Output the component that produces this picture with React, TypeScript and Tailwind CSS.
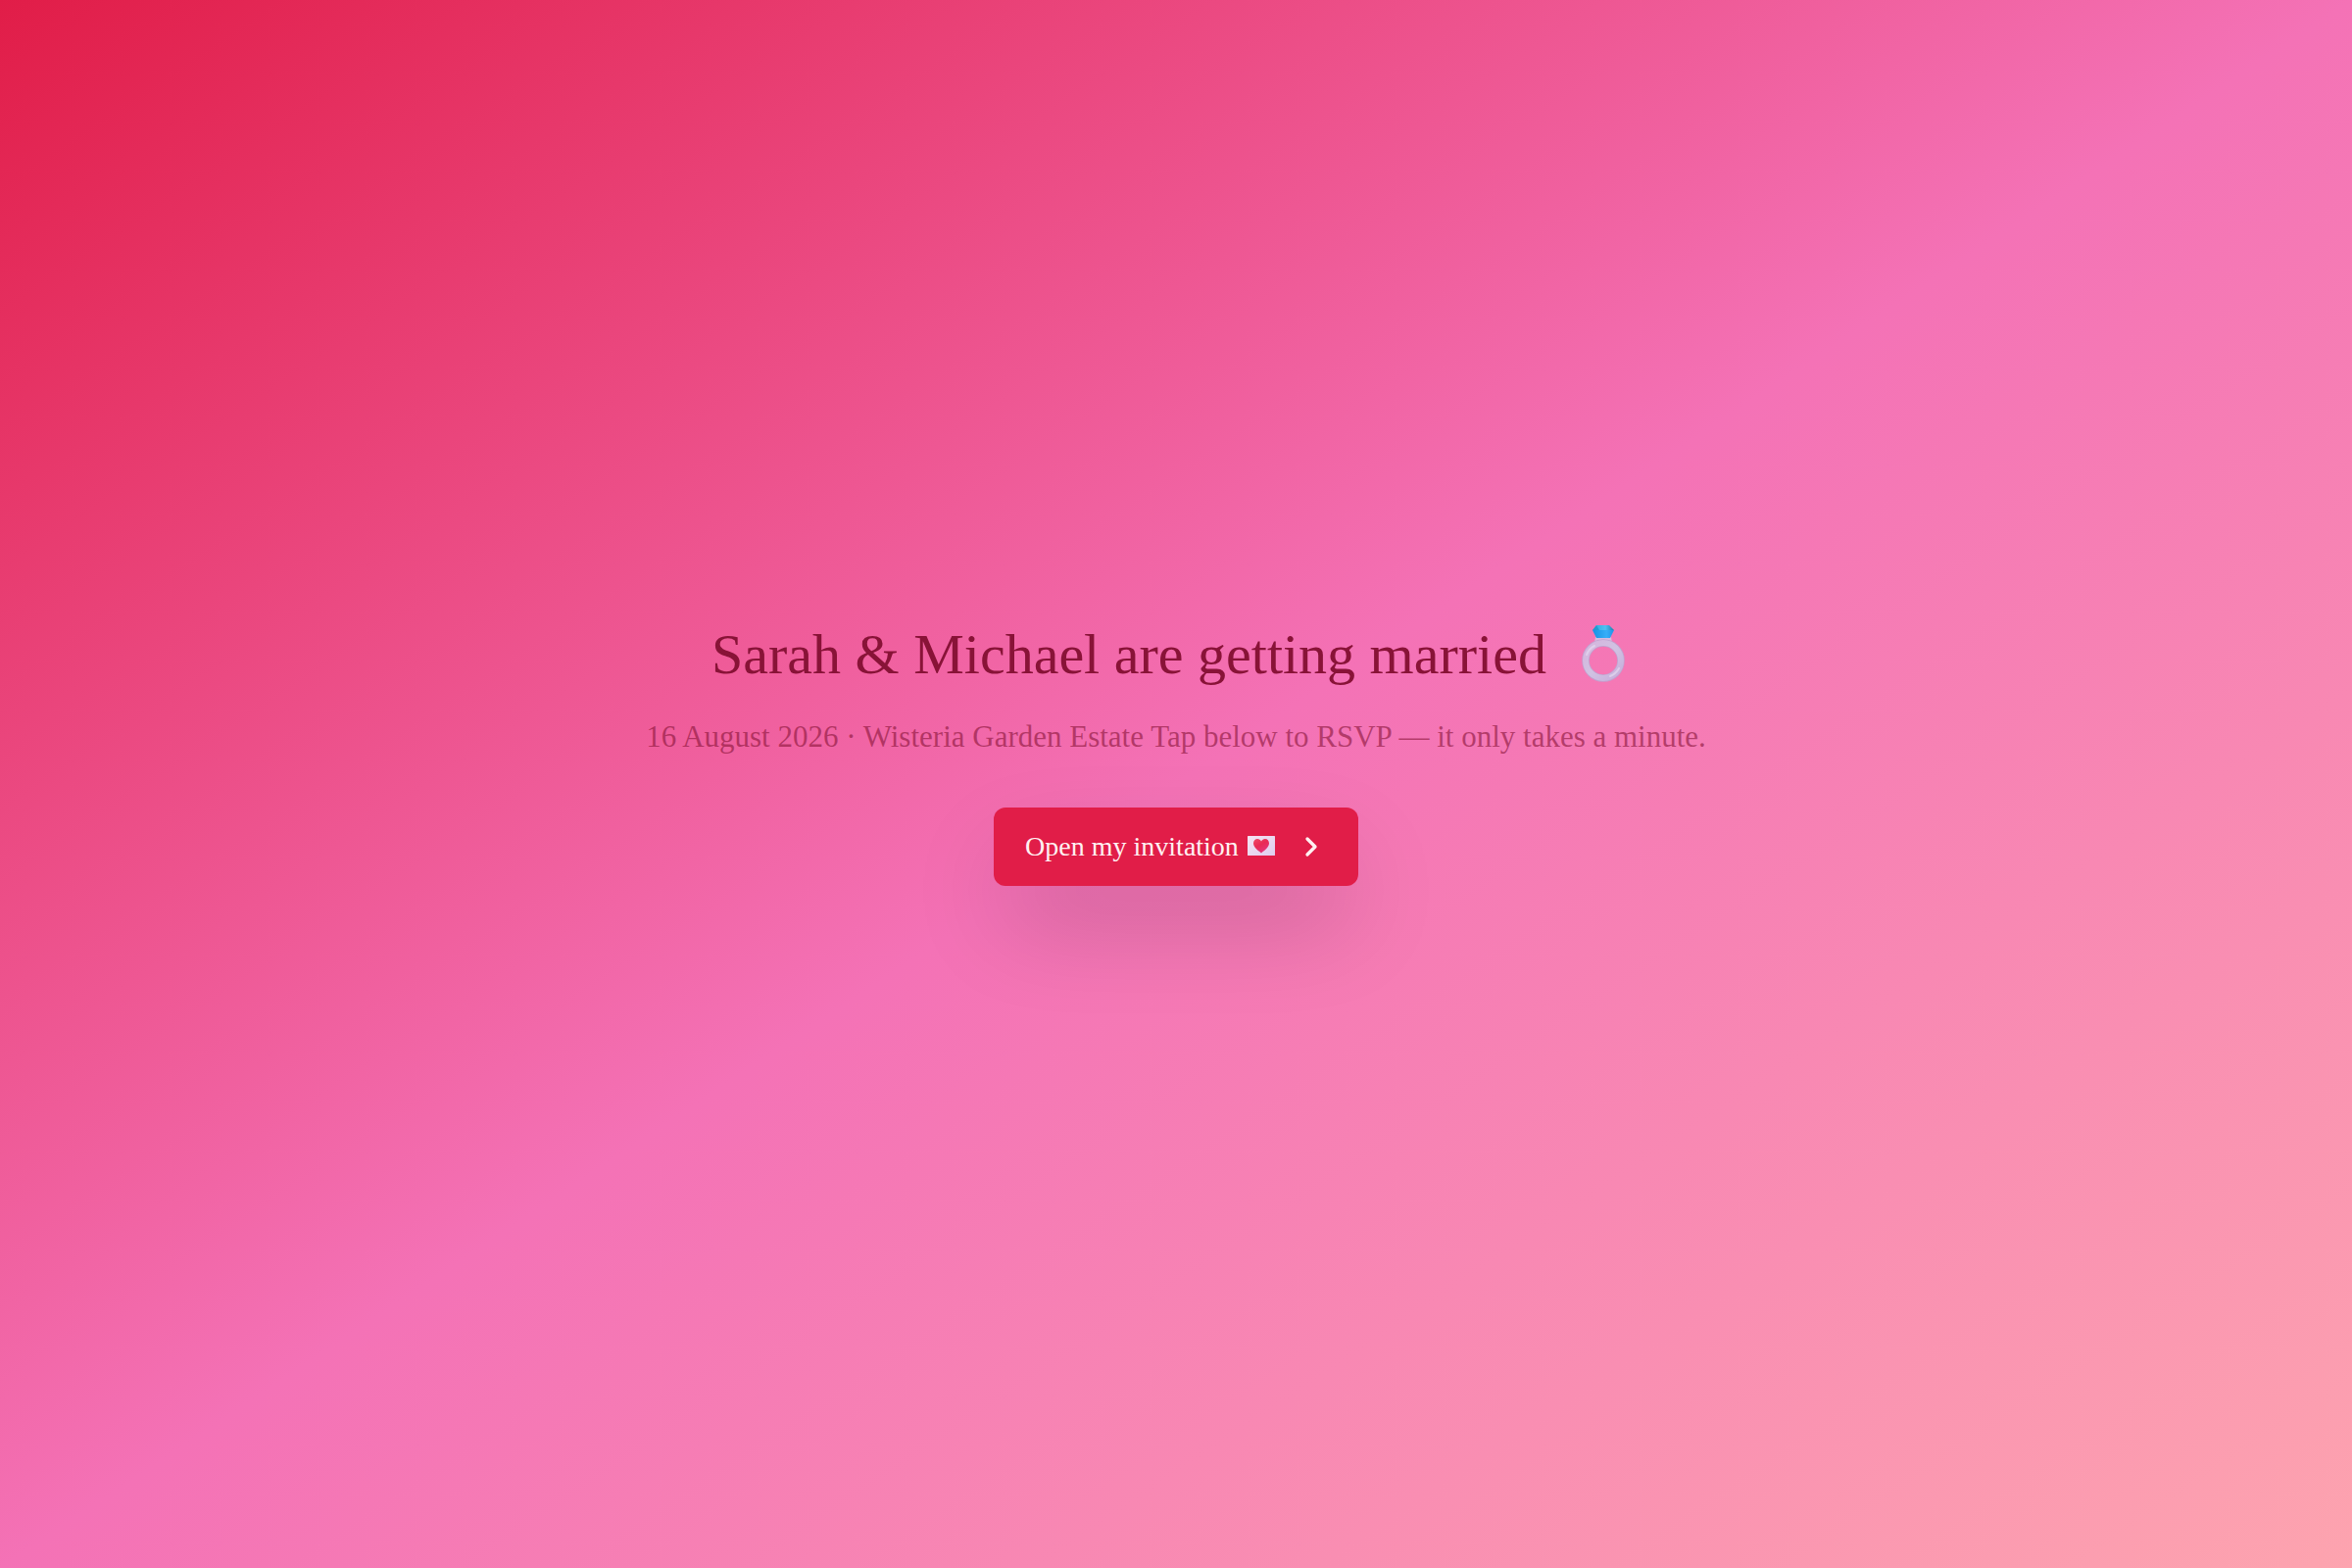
import { ChevronRight } from "lucide-react";

function RingIcon() {
  return (
    <svg viewBox="0 0 76 60" role="img" aria-label="Ring" className="h-[60px] w-[76px] shrink-0">
      <defs>
        <linearGradient id="band" x1="0" y1="0" x2="1" y2="1">
          <stop offset="0" stopColor="#d6b4dd" />
          <stop offset="0.5" stopColor="#d0c2e2" />
          <stop offset="1" stopColor="#c8addb" />
        </linearGradient>
        <linearGradient id="gemTop" x1="0" y1="0" x2="1" y2="0">
          <stop offset="0" stopColor="#27a9dd" />
          <stop offset="0.6" stopColor="#4fc0f2" />
          <stop offset="1" stopColor="#1b7fae" />
        </linearGradient>
        <linearGradient id="gemBase" x1="0" y1="0" x2="1" y2="0">
          <stop offset="0" stopColor="#1692e4" />
          <stop offset="0.65" stopColor="#36aef8" />
          <stop offset="1" stopColor="#1f93ea" />
        </linearGradient>
      </defs>
      <path d="M30 12h16l1 6H29z" fill="#d6bbe0" />
      <circle cx="38" cy="36" r="18" fill="none" stroke="#c0a3d0" strokeWidth="7.5" />
      <circle cx="38" cy="36" r="18" fill="none" stroke="url(#band)" strokeWidth="6" />
      <path d="M21 30a18 18 0 0 1 8-9M54 44a18 18 0 0 1-9 8" fill="none" stroke="#e2d8ef" strokeWidth="2" strokeLinecap="round" opacity="0.7" />
      <path d="M31 0h13l5 5H27z" fill="url(#gemTop)" />
      <path d="M27 5h22l-4 8H31z" fill="url(#gemBase)" />
      <path d="M27 5l4-5 3 5z" fill="#188cc4" opacity="0.6" />
    </svg>
  );
}

function LoveLetterIcon() {
  return (
    <svg viewBox="0 0 38 28" role="img" aria-label="Love letter" className="h-7 w-[38px] shrink-0">
      <defs>
        <linearGradient id="paper" x1="0" y1="0" x2="1" y2="1">
          <stop offset="0" stopColor="#f6e2f2" />
          <stop offset="1" stopColor="#decdee" />
        </linearGradient>
        <linearGradient id="heart" x1="0" y1="0" x2="0.6" y2="1">
          <stop offset="0" stopColor="#f04866" />
          <stop offset="0.5" stopColor="#e92a55" />
          <stop offset="1" stopColor="#e5357f" />
        </linearGradient>
      </defs>
      <rect x="5" y="3" width="28" height="20" rx="0.5" fill="url(#paper)" />
      <path d="M19 20.500C14.500 17 11 14.300 11 10.600 11 7.900 12.800 6 15.100 6c1.700 0 3.100 1 3.900 2.500C19.800 7 21.200 6 22.900 6 25.200 6 27 7.900 27 10.600c0 3.700-3.500 6.400-8 9.900z" fill="url(#heart)" />
    </svg>
  );
}

export default function App() {
  return (
    <main className="flex min-h-screen flex-col items-center justify-center bg-linear-to-br/srgb from-[#e11d48] from-0% via-[#f472b6] via-50% to-[#fda4af] to-100% px-8 pb-16 text-center font-['Liberation_Serif',serif]">
      <h1 className="flex items-center gap-5 text-[58px] leading-[72px] text-[#881337]">
        <span>Sarah &amp; Michael are getting married</span>
        <RingIcon />
      </h1>
      <p className="mt-7 text-[31px] leading-10 text-[#881337]/60">
        16 August 2026 · Wisteria Garden Estate Tap below to RSVP — it only takes a minute.
      </p>
      <button
        type="button"
        className="mt-13 flex h-20 items-center rounded-xl bg-[#e11d48] px-8 text-[28px] leading-10 text-[#fff1f2] shadow-[0_44px_100px_-14px_rgba(0,0,0,0.22)]"
      >
        <span className="mr-1">Open my invitation</span>
        <LoveLetterIcon />
        <ChevronRight aria-hidden="true" strokeWidth={2.5} className="ml-4 size-8" />
      </button>
    </main>
  );
}
